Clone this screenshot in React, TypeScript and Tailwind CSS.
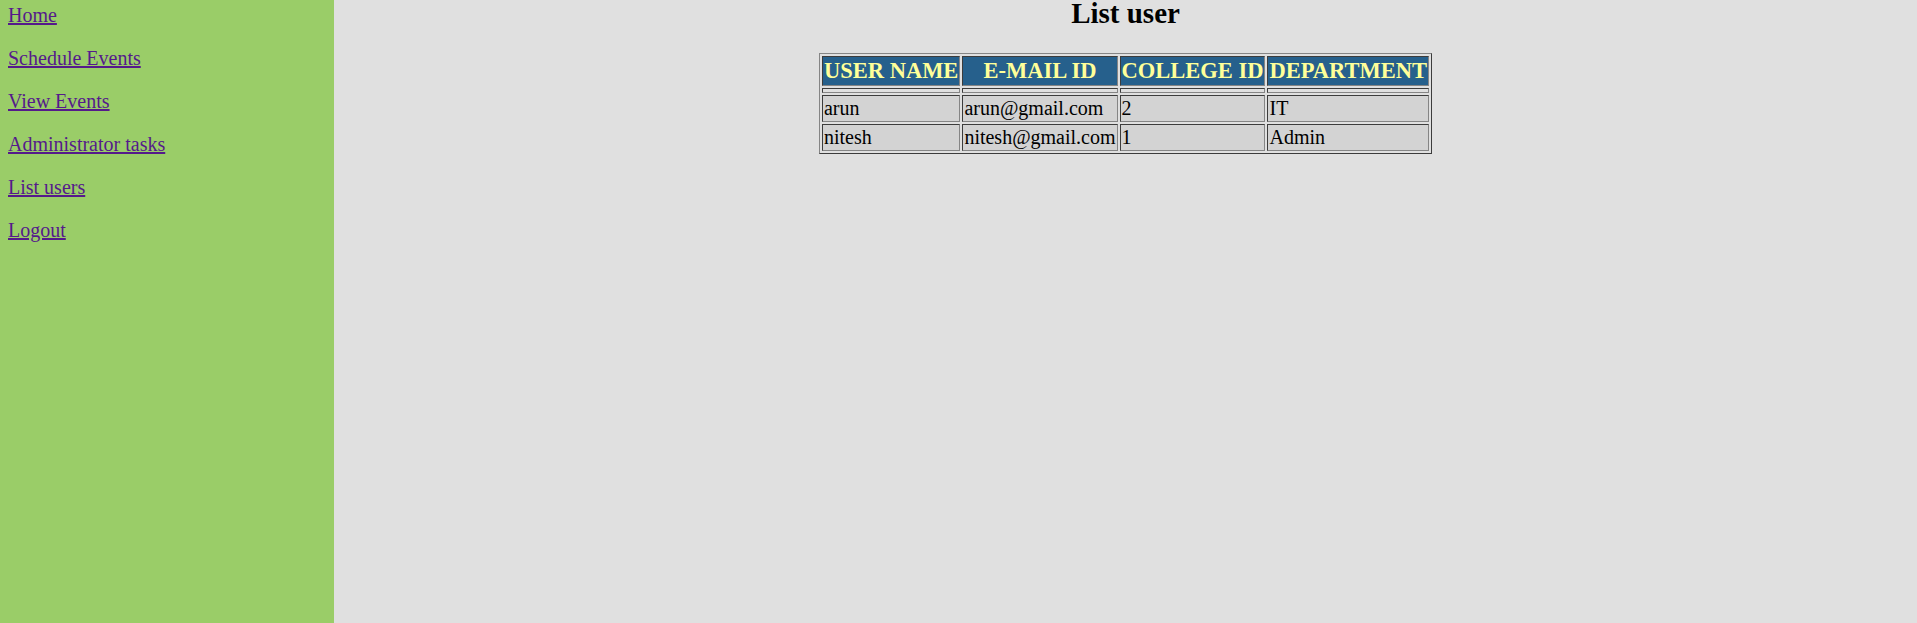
const links = ["Home", "Schedule Events", "View Events", "Administrator tasks", "List users", "Logout"];

const users = [
  { name: "arun", email: "arun@gmail.com", college: "2", dept: "IT" },
  { name: "nitesh", email: "nitesh@gmail.com", college: "1", dept: "Admin" },
];

const headers = ["USER NAME", "E-MAIL ID", "COLLEGE ID", "DEPARTMENT"];

const cellBorder =
  "border border-t-[#3c3c3c] border-l-[#3c3c3c] border-b-[#858585] border-r-[#858585]";

export default function App() {
  return (
    <div className="flex h-[623px] w-full font-['Liberation_Serif','Times_New_Roman',serif] text-black">
      <nav className="w-[334px] shrink-0 bg-[#9acd68] px-[8px] pt-[4px]">
        <ul className="flex flex-col gap-[20px]">
          {links.map((l) => (
            <li key={l} className="text-[20px] leading-[23px]">
              <a href="#" className="text-[#551a8b] underline">
                {l}
              </a>
            </li>
          ))}
        </ul>
      </nav>

      <main className="flex flex-1 flex-col items-center bg-[#e0e0e0]">
        <h2 className="text-[29px] font-bold leading-[26px]">List user</h2>

        <table className="mt-[27px] border-separate border-spacing-[2px] border border-t-[#858585] border-l-[#858585] border-b-[#3c3c3c] border-r-[#3c3c3c]">
          <thead>
            <tr>
              {headers.map((h) => (
                <th
                  key={h}
                  className={`${cellBorder} bg-[#26608c] p-[1px] text-center text-[22.5px] font-bold leading-[26px] text-[#ffff99]`}
                >
                  {h}
                </th>
              ))}
            </tr>
          </thead>
          <tbody>
            <tr>
              {headers.map((h) => (
                <td key={h} className={`${cellBorder} p-[1px]`}>
                  <div className="h-[1px]" />
                </td>
              ))}
            </tr>
            {users.map((u) => (
              <tr key={u.name}>
                {[u.name, u.email, u.college, u.dept].map((v, i) => (
                  <td
                    key={i}
                    className={`${cellBorder} bg-[#d3d3d3] p-[1px] text-left text-[20px] leading-[23px]`}
                  >
                    {v}
                  </td>
                ))}
              </tr>
            ))}
          </tbody>
        </table>
      </main>
    </div>
  );
}
